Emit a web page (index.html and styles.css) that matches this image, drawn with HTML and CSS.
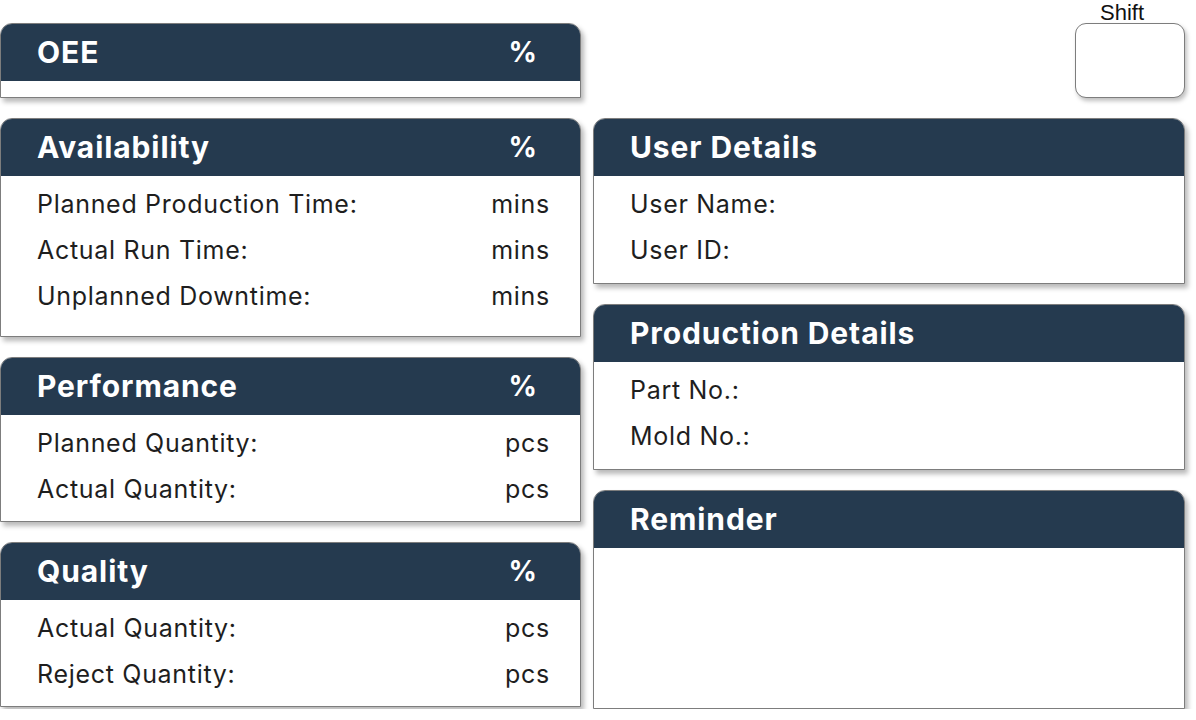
FILE: index.html
```html
<!DOCTYPE html>
<html>
<head>
<meta charset="utf-8">
<link rel="stylesheet" href="styles.css">
</head>
<body>
<div class="page">
  <div class="col col-left">
    <section class="card">
      <div class="card-head"><span>OEE</span><span class="pct">%</span></div>
      <div class="card-body body-0"></div>
    </section>
    <section class="card">
      <div class="card-head"><span>Availability</span><span class="pct">%</span></div>
      <div class="card-body body-3">
        <div class="row"><span>Planned Production Time:</span><span>mins</span></div>
        <div class="row"><span>Actual Run Time:</span><span>mins</span></div>
        <div class="row"><span>Unplanned Downtime:</span><span>mins</span></div>
      </div>
    </section>
    <section class="card">
      <div class="card-head"><span>Performance</span><span class="pct">%</span></div>
      <div class="card-body body-2l">
        <div class="row"><span>Planned Quantity:</span><span>pcs</span></div>
        <div class="row"><span>Actual Quantity:</span><span>pcs</span></div>
      </div>
    </section>
    <section class="card">
      <div class="card-head"><span>Quality</span><span class="pct">%</span></div>
      <div class="card-body body-2l">
        <div class="row"><span>Actual Quantity:</span><span>pcs</span></div>
        <div class="row"><span>Reject Quantity:</span><span>pcs</span></div>
      </div>
    </section>
  </div>
  <div class="col col-right">
    <div class="shift">
      <div class="shift-label">Shift</div>
      <div class="shift-box"></div>
    </div>
    <section class="card">
      <div class="card-head"><span>User Details</span></div>
      <div class="card-body body-2">
        <div class="row"><span>User Name:</span></div>
        <div class="row"><span>User ID:</span></div>
      </div>
    </section>
    <section class="card">
      <div class="card-head"><span>Production Details</span></div>
      <div class="card-body body-2">
        <div class="row"><span>Part No.:</span></div>
        <div class="row"><span>Mold No.:</span></div>
      </div>
    </section>
    <section class="card">
      <div class="card-head"><span>Reminder</span></div>
      <div class="card-body body-rem"></div>
    </section>
  </div>
</div>
</body>
</html>
```

FILE: styles.css
```css
* { box-sizing: border-box; }
html, body { margin: 0; padding: 0; background: #ffffff; }
body { font-family: Inter, "Noto Sans", sans-serif; color: #1e1e1e; }

.page {
  display: grid;
  grid-template-columns: 581px 592px;
  column-gap: 12px;
  width: 1196px;
}

.col { display: flex; flex-direction: column; gap: 20px; }
.col-left { padding-top: 23px; }

.card {
  background: #ffffff;
  border: 1px solid #7d7d7d;
  border-radius: 12px 12px 0 0;
  box-shadow: 3px 4px 5px rgba(0, 0, 0, 0.28);
  overflow: hidden;
}

.card-head {
  height: 57px;
  background: #253a4f;
  color: #ffffff;
  font-weight: 700;
  font-size: 30px;
  letter-spacing: 0.9px;
  display: flex;
  align-items: center;
  justify-content: space-between;
  padding: 0 43px 0 36px;
}
.card-head span { transform: translateY(-1px); }
.pct { font-weight: 700; font-size: 28px; letter-spacing: 0; }

.card-body { padding-top: 5px; }
.body-0 { height: 16px; padding: 0; }
.body-3 { height: 160px; }
.body-2 { height: 107px; }
.body-2l { height: 106px; }
.body-rem { height: 160px; }

.row {
  height: 46px;
  display: flex;
  align-items: center;
  justify-content: space-between;
  padding: 0 30px 0 36px;
  font-size: 25px;
  letter-spacing: 0.7px;
  line-height: 1;
}

.shift {
  align-self: flex-end;
  width: 110px;
  display: flex;
  flex-direction: column;
  align-items: center;
}
.shift-label {
  height: 23px;
  font-family: "Liberation Sans", Arial, sans-serif;
  font-size: 22px;
  line-height: 25px;
  color: #111;
  margin-right: 16px;
}
.shift-box {
  width: 110px;
  height: 75px;
  border: 1px solid #7d7d7d;
  border-radius: 11px;
  background: #fff;
  box-shadow: 2px 3px 4px rgba(0, 0, 0, 0.25);
}
```
